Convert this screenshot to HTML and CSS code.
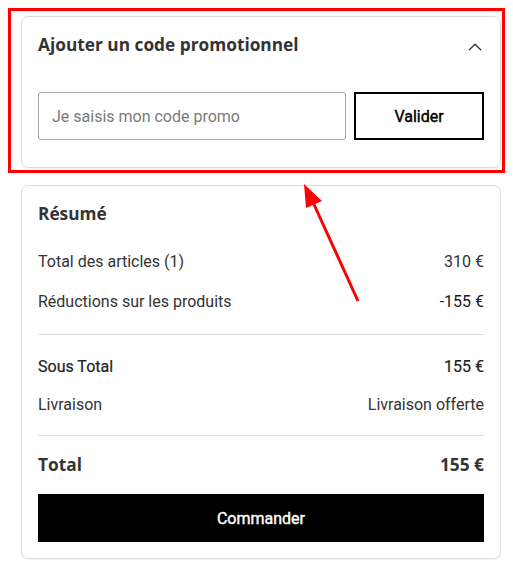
FILE: index.html
```html
<!DOCTYPE html>
<html lang="fr">
<head>
<meta charset="utf-8">
<link rel="stylesheet" href="styles.css">
</head>
<body>
<div class="page">
  <section class="card promo">
    <div class="promo-head">
      <h2 class="title">Ajouter un code promotionnel</h2>
      <svg class="chev" width="14" height="8" viewBox="0 0 14 8"><path d="M0.8 7.2 L7 1.2 L13.2 7.2" fill="none" stroke="#333" stroke-width="1.2"/></svg>
    </div>
    <form class="promo-form">
      <input class="promo-input" type="text" placeholder="Je saisis mon code promo">
      <button class="btn-outline" type="button">Valider</button>
    </form>
  </section>

  <section class="card summary">
    <h2 class="title">Résumé</h2>
    <div class="row first"><span>Total des articles (1)</span><span>310 €</span></div>
    <div class="row gap"><span>Réductions sur les produits</span><span class="strong">-155 €</span></div>
    <hr class="sep sep1">
    <div class="row sub"><span class="medium">Sous Total</span><span class="medium">155 €</span></div>
    <div class="row liv"><span>Livraison</span><span>Livraison offerte</span></div>
    <hr class="sep sep2">
    <div class="row total"><span>Total</span><span>155 €</span></div>
    <button class="btn-primary" type="button">Commander</button>
  </section>
</div>

<div class="highlight"></div>
<svg class="arrow" width="513" height="582" viewBox="0 0 513 582">
  <line x1="358" y1="301" x2="312" y2="200" stroke="#ff0000" stroke-width="3"/>
  <polygon points="304,184 306,208 322,201" fill="#ff0000"/>
</svg>
</body>
</html>
```
FILE: styles.css
```css
html, body {
  margin: 0;
  padding: 0;
  background: #fff;
}
body {
  font-family: Roboto, "Liberation Sans", sans-serif;
  color: #333;
  font-size: 16px;
  position: relative;
  width: 513px;
  height: 582px;
  overflow: hidden;
}
.page {
  padding: 16px 0 0 21px;
  width: 480px;
  display: flex;
  flex-direction: column;
  gap: 17px;
}
.card {
  border: 1px solid #dcdcdf;
  border-radius: 7px;
  box-shadow: 0 1px 1px rgba(0,0,0,0.06);
  padding: 0 16px;
}
.title {
  margin: 0;
  font-family: "Open Sans", Lato, sans-serif;
  font-weight: 700;
  font-size: 17.3px;
  line-height: 24px;
  color: #333;
}
.promo-head {
  display: flex;
  justify-content: space-between;
  align-items: center;
  padding-top: 16px;
  height: 24px;
}
.chev {
  margin-right: 2px;
  margin-top: 3px;
}
.promo-form {
  margin: 35px 0 27px;
  display: flex;
  gap: 8px;
}
.promo-input {
  flex: 1;
  height: 48px;
  box-sizing: border-box;
  border: 1px solid #a7a7a7;
  border-radius: 3px;
  padding: 0 13px;
  font: 16px Roboto, sans-serif;
  color: #333;
  outline: none;
}
.promo-input::placeholder {
  color: #7a7a7a;
}
.btn-outline {
  width: 130px;
  height: 48px;
  box-sizing: border-box;
  border: 2px solid #000;
  background: #fff;
  border-radius: 0;
  font: 400 16px Roboto, sans-serif;
  -webkit-text-stroke: 0.4px #000;
  color: #000;
  cursor: pointer;
}
.summary {
  padding-top: 16px;
  padding-bottom: 16px;
}
.row {
  display: flex;
  justify-content: space-between;
  line-height: 24px;
  font-size: 16px;
  color: #333;
}
.row.first { margin-top: 24px; }
.row.gap { margin-top: 16px; }
.row.sub { margin-top: 20px; }
.row.liv { margin-top: 14px; }
.strong { color: #1a1a1a; }
.medium {
  color: #222;
  -webkit-text-stroke: 0.2px #222;
}
.sep {
  border: 0;
  border-top: 1px solid #dcdcdf;
  margin: 0;
}
.sep1 { margin-top: 20px; }
.sep2 { margin-top: 18px; }
.row.total {
  margin-top: 17px;
  font-family: "Open Sans", Lato, sans-serif;
  font-weight: 700;
  font-size: 17.3px;
}
.btn-primary {
  margin-top: 17px;
  height: 48px;
  width: 100%;
  border: 0;
  background: #000;
  color: #fff;
  font: 400 16px Roboto, sans-serif;
  -webkit-text-stroke: 0.4px #fff;
  cursor: pointer;
}
.highlight {
  position: absolute;
  left: 8px;
  top: 8px;
  width: 491px;
  height: 159px;
  border: 3px solid #ff0000;
  pointer-events: none;
}
.arrow {
  position: absolute;
  left: 0;
  top: 0;
  pointer-events: none;
}
```
